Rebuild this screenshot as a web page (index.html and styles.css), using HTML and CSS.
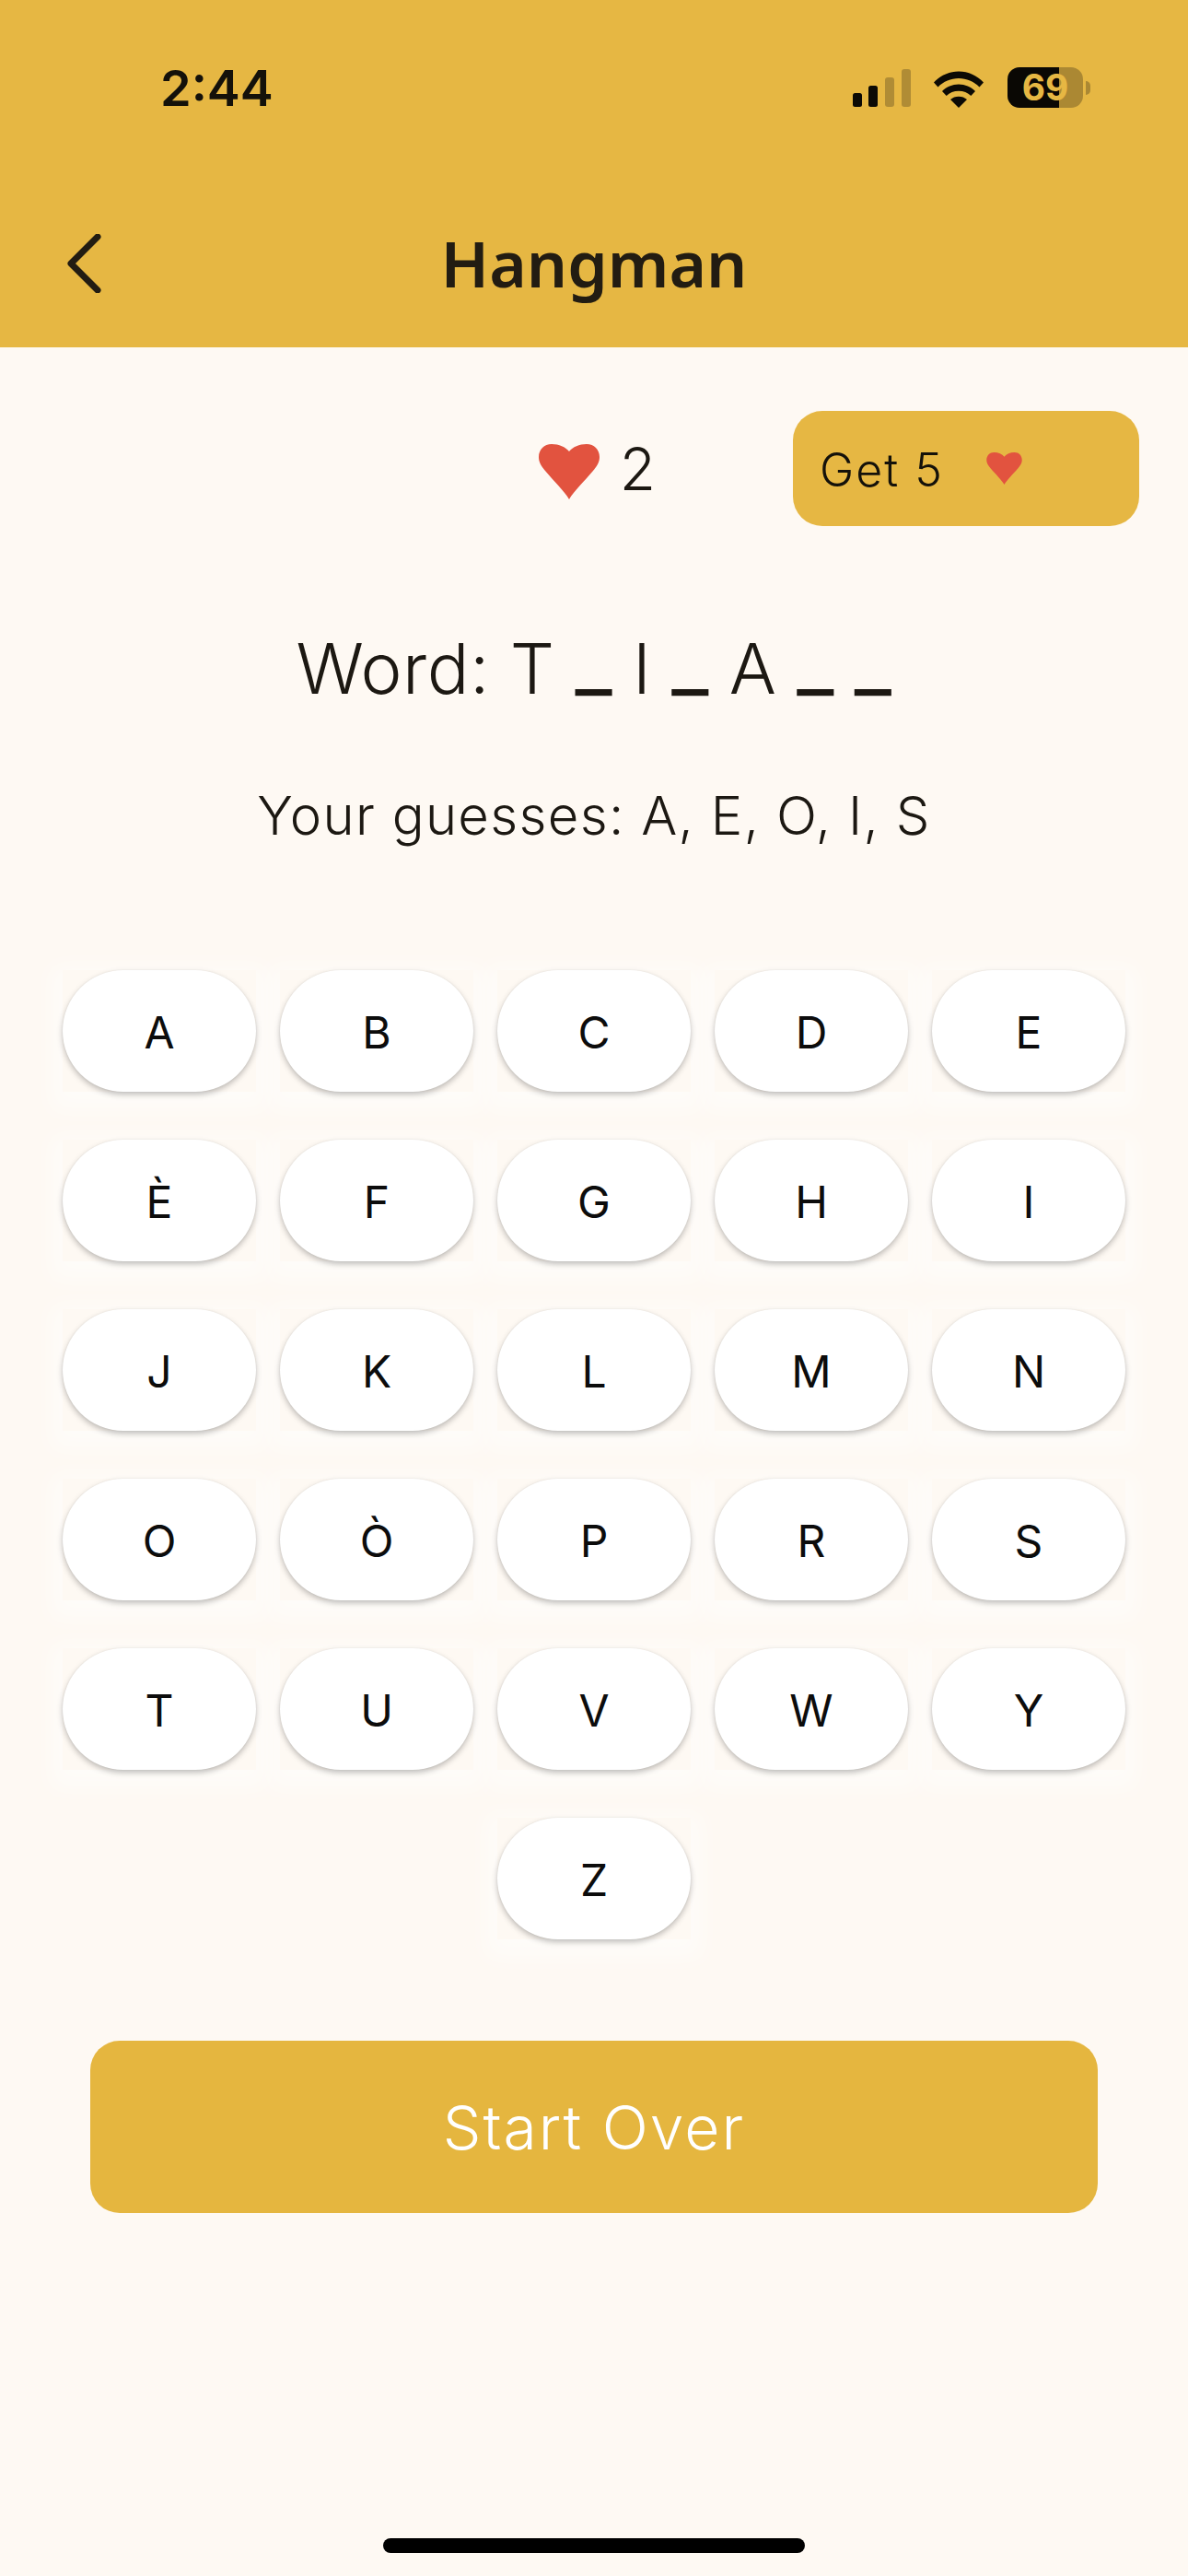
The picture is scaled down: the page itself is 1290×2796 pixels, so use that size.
FILE: index.html
```html
<!DOCTYPE html>
<html lang="en">
<head>
<meta charset="utf-8">
<title>Hangman</title>
<link rel="stylesheet" href="styles.css">
</head>
<body>
<div class="screen">
  <header class="header">
    <div class="status">
      <span class="time">2:44</span>
      <div class="status-icons">
        <svg class="signal" width="64" height="42" viewBox="0 0 64 42">
          <rect x="1" y="26" width="10" height="15" rx="2.5" fill="#0c0a05"/>
          <rect x="18" y="18" width="10" height="23" rx="2.5" fill="#0c0a05"/>
          <rect x="36" y="9" width="10" height="32" rx="3" fill="#b08c35"/>
          <rect x="54" y="0" width="10" height="41" rx="3" fill="#b08c35"/>
        </svg>
        <svg class="wifi" width="56" height="40" viewBox="0 0 56 40">
          <path d="M1 12.5C8 5 17.500 .5 28 .5S48 5 55 12.500L50.500 17.500C44.500 11.500 36.500 8 28 8S11.500 11.500 5.500 17.500Z" fill="#0c0a05"/>
          <path d="M10 22C14.800 17.300 21 14.500 28 14.500S41.200 17.300 46 22L41.300 27C37.800 23.700 33.200 21.800 28 21.800S18.200 23.700 14.700 27Z" fill="#0c0a05"/>
          <path d="M19 31C21.400 28.900 24.500 27.700 28 27.700S34.600 28.900 37 31L28 40Z" fill="#0c0a05"/>
        </svg>
        <div class="battery">
          <div class="battery-body"><span class="battery-level">69</span></div>
          <span class="battery-nub"></span>
        </div>
      </div>
    </div>
    <div class="nav">
      <svg class="back" width="38" height="64" viewBox="0 0 38 64">
        <path d="M34 3L5 32L34 61" fill="none" stroke="#221c12" stroke-width="7" stroke-linecap="round" stroke-linejoin="round"/>
      </svg>
      <h1 class="title">Hangman</h1>
    </div>
  </header>
  <main class="content">
    <div class="lives-row">
      <div class="lives">
        <svg class="heart-big" width="66" height="60" viewBox="0 0 66 60"><path d="M33 60C28 51 16 40 7 29C2 23 0 19 0 14C0 6 6 0 14 0C22 0 29 3 33 8C37 3 44 0 52 0C60 0 66 6 66 14C66 19 64 23 59 29C50 40 38 51 33 60Z" fill="#e2533f"/></svg>
        <span class="lives-count">2</span>
      </div>
      <button class="get-btn">
        <span>Get 5</span>
        <svg class="heart-small" width="39" height="35" viewBox="0 0 66 60"><path d="M33 60C28 51 16 40 7 29C2 23 0 19 0 14C0 6 6 0 14 0C22 0 29 3 33 8C37 3 44 0 52 0C60 0 66 6 66 14C66 19 64 23 59 29C50 40 38 51 33 60Z" fill="#e2533f"/></svg>
      </button>
    </div>
    <p class="word">Word: T <span class="blank">_</span> I <span class="blank">_</span> A <span class="blank">_</span> <span class="blank">_</span></p>
    <p class="guesses">Your guesses: A, E, O, I, S</p>
    <div class="keys">
      <div class="cell"><button class="key">A</button></div>
      <div class="cell"><button class="key">B</button></div>
      <div class="cell"><button class="key">C</button></div>
      <div class="cell"><button class="key">D</button></div>
      <div class="cell"><button class="key">E</button></div>
      <div class="cell"><button class="key">È</button></div>
      <div class="cell"><button class="key">F</button></div>
      <div class="cell"><button class="key">G</button></div>
      <div class="cell"><button class="key">H</button></div>
      <div class="cell"><button class="key">I</button></div>
      <div class="cell"><button class="key">J</button></div>
      <div class="cell"><button class="key">K</button></div>
      <div class="cell"><button class="key">L</button></div>
      <div class="cell"><button class="key">M</button></div>
      <div class="cell"><button class="key">N</button></div>
      <div class="cell"><button class="key">O</button></div>
      <div class="cell"><button class="key">Ò</button></div>
      <div class="cell"><button class="key">P</button></div>
      <div class="cell"><button class="key">R</button></div>
      <div class="cell"><button class="key">S</button></div>
      <div class="cell"><button class="key">T</button></div>
      <div class="cell"><button class="key">U</button></div>
      <div class="cell"><button class="key">V</button></div>
      <div class="cell"><button class="key">W</button></div>
      <div class="cell"><button class="key">Y</button></div>
      <div class="cell"><button class="key">Z</button></div>
    </div>
    <button class="start">Start Over</button>
  </main>
  <div class="home-row"><span class="home-bar"></span></div>
</div>
</body>
</html>
```

FILE: styles.css
```css
* { box-sizing: border-box; }
html, body { margin: 0; padding: 0; }
body { width: 1290px; height: 2796px; background: #fef9f3; font-family: "Inter", "Liberation Sans", sans-serif; color: #1c1812; overflow: hidden; }
p, h1 { margin: 0; }
button { border: 0; font-family: inherit; padding: 0; }

.screen { width: 1290px; height: 2796px; display: flex; flex-direction: column; }

.header { height: 377px; background: #e6b743; display: flex; flex-direction: column; flex: none; }
.status { height: 219px; padding: 68px 106px 0 174px; display: flex; justify-content: space-between; align-items: flex-start; }
.time { font: 600 54px/56px "Inter", sans-serif; color: #14110a; }
.status-icons { display: flex; align-items: flex-start; padding-top: 5px; }
.signal { margin-top: 2px; margin-right: 24px; }
.wifi { margin-top: 4px; margin-right: 25px; }
.battery { display: flex; align-items: center; }
.battery-body { width: 82px; height: 44px; border-radius: 13px; background: linear-gradient(90deg, #0a0804 68%, #ab8833 68%); display: flex; align-items: center; justify-content: center; }
.battery-level { font: 700 39px/44px "Inter", sans-serif; color: #e6b743; }
.battery-nub { width: 5px; height: 15px; margin-left: 3px; background: #ab8833; border-radius: 0 8px 8px 0; }

.nav { flex: 1; position: relative; display: flex; justify-content: center; align-items: flex-start; }
.back { position: absolute; left: 72px; top: 35px; }
.title { font: 600 69.500px/92px "Noto Sans", sans-serif; color: #221c12; padding-top: 20px; }

.content { flex: 1; display: flex; flex-direction: column; align-items: center; padding-top: 69px; }

.lives-row { width: 100%; height: 125px; display: flex; justify-content: flex-end; padding-right: 53px; }
.lives { display: flex; align-items: center; gap: 22px; margin-right: 149px; }
.heart-big { margin-top: 6px; }
.lives-count { font-weight: 350; font-size: 64px; line-height: 76px; }
.get-btn { width: 376px; height: 125px; border-radius: 32px; background: #e6b743; color: #14110a; display: flex; align-items: center; gap: 46px; padding: 2px 0 0 29px; font-size: 50px; font-weight: 350; letter-spacing: 2px; }
.heart-small { margin-top: -2px; }

.word { margin-top: 112px; font-size: 76px; line-height: 84px; font-weight: 350; letter-spacing: .500px; text-align: center; }
.blank { font-size: 88px; line-height: 0; vertical-align: 5px; font-weight: 400; }
.guesses { margin-top: 83px; font-size: 58px; line-height: 70px; font-weight: 350; letter-spacing: 1.300px; text-align: center; }

.keys { width: 1154px; margin-top: 133px; display: flex; flex-wrap: wrap; justify-content: center; gap: 52px 26px; }
.cell { width: 210px; height: 132px; display: flex; box-shadow: 0 8px 22px 12px rgba(255,255,255,.5); }
.key { width: 100%; border-radius: 66px; background: #fff; color: #0c0c0c; font-size: 48px; padding-top: 2px; box-shadow: 0 3px 6px rgba(0,0,0,.25), 0 0 2px rgba(0,0,0,.06); }

.start { width: 1094px; height: 187px; margin-top: 110px; border-radius: 32px; background: #e5b63f; color: #fff; font-size: 66px; font-weight: 350; letter-spacing: 2px; flex: none; }

.home-row { flex: none; height: 41px; display: flex; justify-content: center; }
.home-bar { width: 458px; height: 16px; border-radius: 8px; background: #000; }
```
